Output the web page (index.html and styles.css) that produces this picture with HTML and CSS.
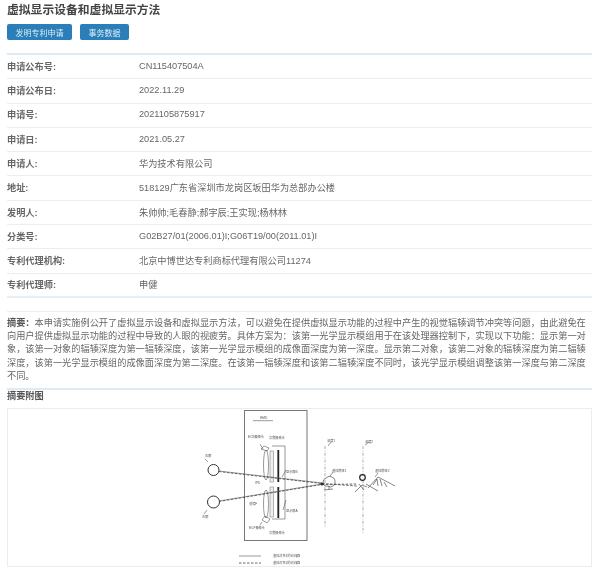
FILE: index.html
```html
<!DOCTYPE html>
<html lang="zh-CN">
<head>
<meta charset="utf-8">
<title>虚拟显示设备和虚拟显示方法</title>
<link rel="stylesheet" href="styles.css">
</head>
<body>
<main class="page">
  <h1 class="title">虚拟显示设备和虚拟显示方法</h1>
  <div class="actions">
    <a class="btn btn-wide">发明专利申请</a>
    <a class="btn btn-narrow">事务数据</a>
  </div>
  <dl class="info">
    <div class="row"><dt>申请公布号:</dt><dd>CN115407504A</dd></div>
    <div class="row"><dt>申请公布日:</dt><dd>2022.11.29</dd></div>
    <div class="row"><dt>申请号:</dt><dd>2021105875917</dd></div>
    <div class="row"><dt>申请日:</dt><dd>2021.05.27</dd></div>
    <div class="row"><dt>申请人:</dt><dd>华为技术有限公司</dd></div>
    <div class="row"><dt>地址:</dt><dd>518129广东省深圳市龙岗区坂田华为总部办公楼</dd></div>
    <div class="row"><dt>发明人:</dt><dd>朱帅帅;毛春静;郝宇辰;王实现;杨林林</dd></div>
    <div class="row"><dt>分类号:</dt><dd>G02B27/01(2006.01)I;G06T19/00(2011.01)I</dd></div>
    <div class="row"><dt>专利代理机构:</dt><dd>北京中博世达专利商标代理有限公司11274</dd></div>
    <div class="row"><dt>专利代理师:</dt><dd>申健</dd></div>
  </dl>
  <p class="abstract"><b>摘要&#xFF1A;</b>本申请实施例公开了虚拟显示设备和虚拟显示方法&#xFF0C;可以避免在提供虚拟显示功能的过程中产生的视觉辐辏调节冲突等问题&#xFF0C;由此避免在向用户提供虚拟显示功能的过程中导致的人眼的视疲劳。具体方案为&#xFF1A;该第一光学显示模组用于在该处理器控制下&#xFF0C;实现以下功能&#xFF1A;显示第一对象&#xFF0C;该第一对象的辐辏深度为第一辐辏深度&#xFF0C;该第一光学显示模组的成像面深度为第一深度。显示第二对象&#xFF0C;该第二对象的辐辏深度为第二辐辏深度&#xFF0C;该第一光学显示模组的成像面深度为第二深度。在该第一辐辏深度和该第二辐辏深度不同时&#xFF0C;该光学显示模组调整该第一深度与第二深度不同。</p>
  <h2 class="figure-title">摘要附图</h2>
  <figure class="figure">
    <svg class="drawing" viewBox="8 409 583 157" width="583" height="157" aria-label="摘要附图">
      <g class="ink">
        <rect x="244.5" y="410.5" width="62.5" height="130" class="frame"/>
        <path d="M253 420.7H273"/>
        <path d="M272 446H285V519H272"/>
        <circle cx="213.5" cy="470" r="5.5" class="eye"/>
        <circle cx="213.5" cy="502" r="6" class="eye"/>
        <path d="M205 459l3 3M207 510l-3 4"/>
        <ellipse cx="266" cy="465" rx="2.5" ry="15"/>
        <ellipse cx="266" cy="504" rx="2.5" ry="14"/>
        <rect x="270" y="451" width="3.5" height="31" class="lens"/>
        <rect x="270" y="487" width="3.5" height="30" class="lens"/>
        <path d="M278.3 450V482M278.3 487V518" class="bar"/>
        <path d="M219 471L322 483M219 501L322 484"/>
        <path d="M219 471.600L322 483.500L357 486M219 501.500L322 484.500L357 484" class="dash"/>
        <path d="M325 446V528M363 446V533" class="dashdot"/>
        <path d="M261 449l3-3 5 2-2 3zM262 520l3-4 5 3-3 4z"/>
        <path d="M260 444l3 5M262 522l-2 3M286 470l-4 7M286 500l-3 10"/>
        <path d="M323 483q0-4 3-5q3-3 6-1q3 1 3 4q1 4-2 5q-3 2-5 0q-4 1-5-3zM324 490l9-1M329 486v3" class="tree"/>
        <circle cx="322" cy="484" r="1" class="sun"/>
        <circle cx="362.500" cy="477.500" r="2.800" class="sun"/>
        <path d="M368 488l10-11 17 9M373 485l4-6 1 7M380 479l2 7M384 482l3 5M355 492l7-7 5 2M359 484l5 6M366 484l12 7" class="hill"/>
        <path d="M328 446l3-4M365 445l4-3M330 476l3-4M375 477l3-4"/>
        <path d="M239 556H261"/>
        <path d="M239 563H261" class="dash"/>
      </g>
      <g class="tiny">
        <text x="260" y="419">HMD</text>
        <text x="205" y="457">右眼</text>
        <text x="202" y="518">左眼</text>
        <text x="248" y="438">ECB摄像头</text>
        <text x="269" y="439">交焦摄像头</text>
        <text x="286" y="473">显示屏B</text>
        <text x="286" y="512">显示屏A</text>
        <text x="255" y="484">IPD</text>
        <text x="249" y="505">透镜F</text>
        <text x="249" y="529">ECF摄像头</text>
        <text x="269" y="534">交焦摄像头</text>
        <text x="327" y="442">深度1</text>
        <text x="365" y="443">深度2</text>
        <text x="332" y="472">虚拟物体1</text>
        <text x="375" y="472">虚拟物体2</text>
        <text x="273" y="557">虚拟对象1的光线路</text>
        <text x="273" y="564">虚拟对象2的光线路</text>
      </g>
    </svg>
  </figure>
</main>
</body>
</html>
```
FILE: styles.css
```css
* { box-sizing: border-box; }
html, body { margin: 0; padding: 0; background: #fff; }
body {
  width: 600px;
  height: 576px;
  overflow: hidden;
  font-family: "Liberation Sans", "Noto Sans CJK SC", sans-serif;
  font-size: 9.2px;
  color: #666;
}
.page { width: 585px; margin-left: 7px; filter: blur(0.3px); }
.title {
  margin: 0;
  height: 24px;
  padding-top: 2.5px;
  font-size: 11.8px;
  line-height: 14px;
  font-weight: 700;
  color: #444;
}
.actions { display: flex; gap: 8px; height: 29px; }
.btn {
  display: flex;
  align-items: center;
  justify-content: center;
  height: 16px;
  border-radius: 2px;
  background: #2a7fb8;
  color: #dcecf7;
  font-size: 8px;
}
.btn-wide { width: 65px; }
.btn-narrow { width: 49px; }
.info { margin: 0; border-top: 2px solid #dcebf5; }
.row {
  display: flex;
  align-items: center;
  height: 24.3px;
  padding-bottom: 1.5px;
  border-bottom: 1px solid #e4eff7;
}
.row:last-child { border-bottom-width: 2px; }
.row dt { width: 132px; font-weight: 700; color: #666; }
.row dd { margin: 0; }
.abstract {
  margin: 13px 0 0;
  padding: 5px 5px 5px 0;
  border-top: 1px solid #e4eff7;
  border-bottom: 2px solid #dcebf5;
  line-height: 13.25px;
  color: #666;
}
.abstract b { color: #555; }
.figure-title {
  margin: 0;
  height: 18px;
  font-size: 9.2px;
  line-height: 12px;
  font-weight: 700;
  color: #555;
}
.figure {
  margin: 0;
  height: 159px;
  border: 1px solid #ececec;
}
.drawing { display: block; }
.ink { fill: none; stroke: #555; stroke-width: 0.6; }
.ink .frame { stroke: #777; stroke-width: 1; }
.ink .eye { stroke: #333; stroke-width: 1; }
.ink .lens { stroke: #888; fill: #eee; stroke-width: 0.6; }
.ink .bar { stroke: #222; stroke-width: 1.8; }
.ink .dash { stroke-dasharray: 2.5 1.5; stroke: #444; stroke-width: 0.8; }
.ink .dashdot { stroke-dasharray: 3 1.5 0.8 1.5; stroke: #777; }
.ink .sun { stroke: #222; stroke-width: 1.2; }
.ink .hill, .ink .tree { stroke: #333; }
.tiny text { font-size: 3.2px; fill: #555; }
```
